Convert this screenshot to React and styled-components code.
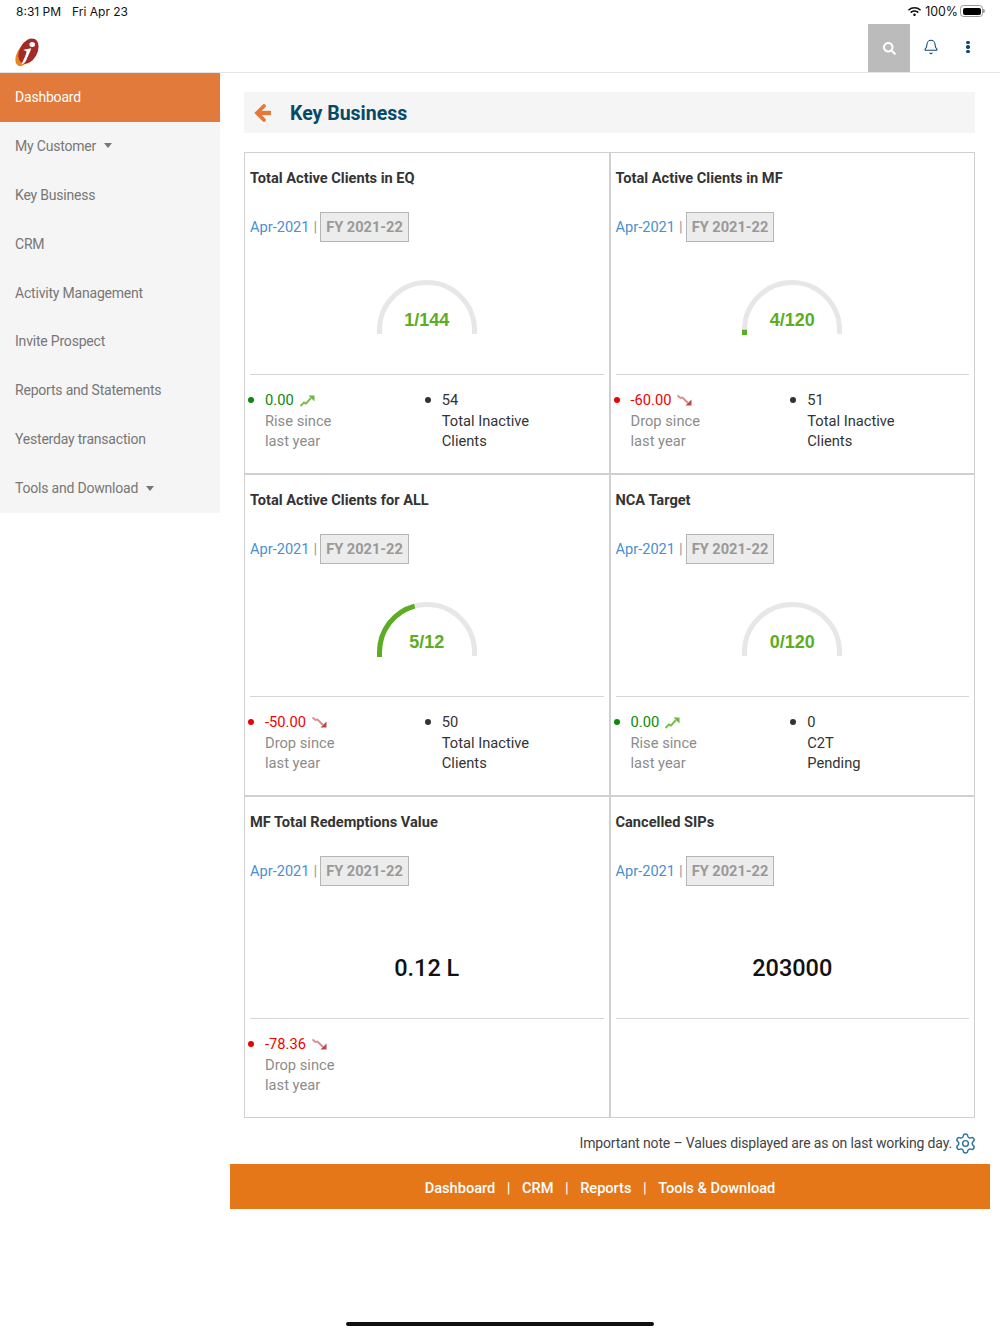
import styled, { createGlobalStyle } from "styled-components";
import { Bell, Settings } from "lucide-react";
import { FaSearch, FaWifi } from "react-icons/fa";

const GlobalStyle = createGlobalStyle`
    html, body {
        margin: 0;
        padding: 0;
        background: #fff;
        font-family: Roboto, "Liberation Sans", sans-serif;
    }
    * {
        box-sizing: border-box;
    }
`;

const Page = styled.div`
    width: 1000px;
    height: 1334px;
    position: relative;
    overflow: hidden;
`;

const StatusBar = styled.div`
    height: 24px;
    padding: 0 15px 2px 16px;
    display: flex;
    justify-content: space-between;
    align-items: center;
    font-family: Inter, "Liberation Sans", sans-serif;
    font-size: 12px;
    color: #111;
`;

const StatusLeft = styled.div`
    display: flex;
    gap: 11px;
`;

const StatusRight = styled.div`
    display: flex;
    align-items: center;
    gap: 4px;
    font-size: 12.4px;
`;

const Battery = styled.div`
    width: 23px;
    height: 12px;
    margin: 0 2px 0 -2px;
    padding: 1.5px;
    border: 1px solid #999;
    border-radius: 3.5px;
    position: relative;
    &::before {
        content: "";
        display: block;
        height: 100%;
        background: #000;
        border-radius: 2px;
    }
    &::after {
        content: "";
        position: absolute;
        right: -3px;
        top: 3px;
        width: 2px;
        height: 4px;
        background: #999;
        border-radius: 0 2px 2px 0;
    }
`;

const Header = styled.header`
    height: 49px;
    display: flex;
    align-items: stretch;
    justify-content: space-between;
    border-bottom: 1px solid #e4e4e4;
`;

const Logo = styled.div`
    padding: 13px 0 0 14px;
`;

const HeaderActions = styled.div`
    display: flex;
    align-items: stretch;
    margin-right: 16px;
`;

const SearchButton = styled.div`
    width: 42px;
    background: #bbbbbb;
    color: #fff;
    display: flex;
    justify-content: center;
    align-items: center;
    font-size: 13px;
`;

const BellButton = styled.div`
    width: 42px;
    color: #0a4a68;
    display: flex;
    justify-content: center;
    align-items: center;
    padding-bottom: 2px;
`;

const DotsButton = styled.div`
    width: 32px;
    padding-bottom: 2px;
    display: flex;
    flex-direction: column;
    justify-content: center;
    align-items: center;
    gap: 1px;
    span {
        width: 3.5px;
        height: 3.5px;
        border-radius: 50%;
        background: #0a4a68;
    }
`;

const Body = styled.div`
    display: flex;
    align-items: flex-start;
`;

const Sidebar = styled.nav`
    width: 220px;
    flex-shrink: 0;
    background: #f5f5f5;
`;

const NavItem = styled.div`
    height: 48.9px;
    padding: 0 0 1px 15px;
    display: flex;
    align-items: center;
    font-size: 14px;
    letter-spacing: -0.2px;
    color: ${({ $active }) => ($active ? "#fff" : "#777")};
    background: ${({ $active }) => ($active ? "#e27a3b" : "transparent")};
`;

const Caret = styled.span`
    margin-left: 8px;
    border-left: 4.5px solid transparent;
    border-right: 4.5px solid transparent;
    border-top: 5px solid #777;
`;

const Main = styled.main`
    flex: 1;
    padding: 19px 10px 0;
`;

const Content = styled.div`
    margin: 0 15px 0 14px;
`;

const TitleBar = styled.div`
    height: 41px;
    padding-left: 10px;
    background: #f5f5f5;
    display: flex;
    align-items: center;
    gap: 18px;
`;

const Title = styled.h1`
    margin: 0;
    padding-top: 1px;
    font-size: 19.5px;
    font-weight: 700;
    color: #064a68;
`;

const CardGrid = styled.div`
    margin-top: 19px;
    display: grid;
    grid-template-columns: 1fr 1fr;
    grid-auto-rows: 322px;
`;

const Card = styled.section`
    border: 1px solid #d0d0d0;
    padding: 0 5px;
`;

const CardTitle = styled.div`
    padding-top: 14px;
    font-size: 14.6px;
    line-height: 22px;
    font-weight: 700;
    color: #333;
`;

const Period = styled.div`
    margin-top: 23px;
    height: 30px;
    display: flex;
    align-items: center;
    gap: 4px;
    font-size: 14.6px;
    color: #4a90d2;
`;

const Pipe = styled.span`
    margin-right: -1px;
    color: #999;
    font-size: 15px;
`;

const PeriodButton = styled.span`
    height: 30px;
    padding: 0 5px;
    display: flex;
    align-items: center;
    background: #ececec;
    border: 1px solid #b5b5b5;
    color: #999;
    font-weight: 700;
`;

const ChartArea = styled.div`
    height: 133px;
    border-bottom: 1px solid #d6d6d6;
    display: flex;
    justify-content: center;
    padding-top: 38px;
`;

const GaugeWrap = styled.div`
    width: 100px;
    height: 55px;
    position: relative;
`;

const GaugeLabel = styled.div`
    position: absolute;
    left: 0;
    right: 0;
    top: 29px;
    text-align: center;
    font-family: "Liberation Sans", Arial, sans-serif;
    font-size: 18px;
    line-height: 22px;
    font-weight: 700;
    color: #5bad23;
`;

const BigValue = styled.div`
    flex: 1;
    padding-top: 26px;
    text-align: center;
    font-size: 23.5px;
    line-height: 36px;
    font-weight: 500;
    color: #111;
`;

const Stats = styled.div`
    padding-top: 15px;
    display: grid;
    grid-template-columns: 1fr 1fr;
    font-size: 14.7px;
    line-height: 20.5px;
`;

const Stat = styled.div`
    position: relative;
    padding-left: 15px;
    color: ${({ $muted }) => ($muted ? "#8c8c8c" : "#333")};
`;

const StatValue = styled.div`
    display: flex;
    align-items: center;
    gap: 6px;
    color: ${({ $color }) => $color};
    &::before {
        content: "";
        position: absolute;
        left: -2px;
        top: 7px;
        width: 6px;
        height: 6px;
        border-radius: 50%;
        background: ${({ $color }) => $color};
    }
`;

const Note = styled.div`
    height: 46px;
    padding-top: 4px;
    display: flex;
    justify-content: flex-end;
    align-items: center;
    gap: 2px;
    font-size: 14px;
    letter-spacing: -0.15px;
    color: #444;
`;

const GearIcon = styled.span`
    display: flex;
    margin-right: -2px;
    color: #2f7396;
`;

const FooterBar = styled.footer`
    height: 45px;
    padding: 2px 20px 0 0;
    background: #e57718;
    color: #fff;
    font-size: 14.6px;
    font-weight: 500;
    display: flex;
    justify-content: center;
    align-items: center;
`;

const FooterSep = styled.span`
    margin: 0 11.5px;
    font-weight: 400;
    font-size: 15px;
`;

const HomeIndicator = styled.div`
    position: absolute;
    left: 346px;
    bottom: 8px;
    width: 308px;
    height: 4px;
    border-radius: 2px;
    background: #111;
`;

const navItems = [
    { label: "Dashboard", active: true },
    { label: "My Customer", caret: true },
    { label: "Key Business" },
    { label: "CRM" },
    { label: "Activity Management" },
    { label: "Invite Prospect" },
    { label: "Reports and Statements" },
    { label: "Yesterday transaction" },
    { label: "Tools and Download", caret: true },
];

const rise = { value: "0.00", line1: "Rise since", up: true };
const drop = (value) => ({ value, line1: "Drop since", up: false });

const cards = [
    {
        title: "Total Active Clients in EQ",
        gauge: "1/144",
        progress: 0,
        trend: rise,
        other: { value: "54", line1: "Total Inactive", line2: "Clients" },
    },
    {
        title: "Total Active Clients in MF",
        gauge: "4/120",
        progress: 0.001,
        trend: drop("-60.00"),
        other: { value: "51", line1: "Total Inactive", line2: "Clients" },
    },
    {
        title: "Total Active Clients for ALL",
        gauge: "5/12",
        progress: 5 / 12,
        trend: drop("-50.00"),
        other: { value: "50", line1: "Total Inactive", line2: "Clients" },
    },
    {
        title: "NCA Target",
        gauge: "0/120",
        progress: 0,
        trend: rise,
        other: { value: "0", line1: "C2T", line2: "Pending" },
    },
    {
        title: "MF Total Redemptions Value",
        big: "0.12 L",
        trend: drop("-78.36"),
    },
    {
        title: "Cancelled SIPs",
        big: "203000",
    },
];

const GAUGE_R = 47.5;

const Gauge = ({ label, progress }) => {
    const angle = Math.PI * progress;
    const endX = 50 - GAUGE_R * Math.cos(angle);
    const endY = 50 - GAUGE_R * Math.sin(angle);
    return (
        <GaugeWrap>
            <svg width="100" height="55" viewBox="0 0 100 55" fill="none">
                <path
                    d={`M2.5 54V50A${GAUGE_R} ${GAUGE_R} 0 0 1 97.5 50V54`}
                    stroke="#e8e6e6"
                    strokeWidth="5"
                />
                {progress > 0 && (
                    <path
                        d={`M2.5 55V50A${GAUGE_R} ${GAUGE_R} 0 0 1 ${endX} ${endY}`}
                        stroke="#5bad23"
                        strokeWidth="5"
                    />
                )}
            </svg>
            <GaugeLabel>{label}</GaugeLabel>
        </GaugeWrap>
    );
};

const TrendIcon = ({ up }) =>
    up ? (
        <svg width="15" height="13" viewBox="0 0 15 13" fill="none">
            <path
                d="M0.5 12L4 8.5L6 9.5L11 4"
                stroke="#7cc04a"
                strokeWidth="2"
            />
            <path d="M8.5 1.5H14.5V7.5Z" fill="#6cb83a" />
        </svg>
    ) : (
        <svg width="15" height="13" viewBox="0 0 15 13" fill="none">
            <path
                d="M0.5 1.5L3.5 4L5.5 3.5L11 9"
                stroke="#d98a8a"
                strokeWidth="1.8"
            />
            <path d="M8.5 11.5H14.5V5.5Z" fill="#b84a4a" />
        </svg>
    );

const BackArrow = () => (
    <svg width="18" height="18" viewBox="0 0 18 18" fill="none">
        <path d="M17 9H4" stroke="#e5793a" strokeWidth="4.4" />
        <path
            d="M10 2L3 9L10 16"
            stroke="#e5793a"
            strokeWidth="3.8"
            strokeLinecap="round"
        />
    </svg>
);

const LogoMark = () => (
    <svg width="28" height="30" viewBox="0 0 30 32">
        <ellipse
            cx="10.5"
            cy="19"
            rx="7.5"
            ry="13"
            transform="rotate(28 10.5 19)"
            fill="#e98420"
        />
        <ellipse
            cx="15.5"
            cy="15"
            rx="9.5"
            ry="14.5"
            transform="rotate(28 15.5 15)"
            fill="#a32a26"
        />
        <ellipse cx="19.5" cy="8" rx="3" ry="2.7" fill="#fff" />
        <path
            d="M10 13.5L18.5 12C17.5 16 14.5 21 13 25C12 27.5 9.5 29 8 29C10.5 24 13 19 13.5 15.5Z"
            fill="#fff"
        />
    </svg>
);

const App = () => (
    <Page>
        <GlobalStyle />
        <StatusBar>
            <StatusLeft>
                <span>8:31 PM</span>
                <span>Fri Apr 23</span>
            </StatusLeft>
            <StatusRight>
                <FaWifi size={13} />
                <span>100%</span>
                <Battery />
            </StatusRight>
        </StatusBar>
        <Header>
            <Logo>
                <LogoMark />
            </Logo>
            <HeaderActions>
                <SearchButton>
                    <FaSearch />
                </SearchButton>
                <BellButton>
                    <Bell size={16} strokeWidth={1.6} />
                </BellButton>
                <DotsButton>
                    <span />
                    <span />
                    <span />
                </DotsButton>
            </HeaderActions>
        </Header>
        <Body>
            <Sidebar>
                {navItems.map((item) => (
                    <NavItem key={item.label} $active={item.active}>
                        {item.label}
                        {item.caret && <Caret />}
                    </NavItem>
                ))}
            </Sidebar>
            <Main>
                <Content>
                    <TitleBar>
                        <BackArrow />
                        <Title>Key Business</Title>
                    </TitleBar>
                    <CardGrid>
                        {cards.map((card) => (
                            <Card key={card.title}>
                                <CardTitle>{card.title}</CardTitle>
                                <Period>
                                    Apr-2021 <Pipe>|</Pipe>
                                    <PeriodButton>FY 2021-22</PeriodButton>
                                </Period>
                                <ChartArea>
                                    {card.big ? (
                                        <BigValue>{card.big}</BigValue>
                                    ) : (
                                        <Gauge
                                            label={card.gauge}
                                            progress={card.progress}
                                        />
                                    )}
                                </ChartArea>
                                <Stats>
                                    {card.trend && (
                                        <Stat $muted>
                                            <StatValue
                                                $color={
                                                    card.trend.up
                                                        ? "#0a8a0a"
                                                        : "#f00000"
                                                }
                                            >
                                                {card.trend.value}
                                                <TrendIcon up={card.trend.up} />
                                            </StatValue>
                                            <div>{card.trend.line1}</div>
                                            <div>last year</div>
                                        </Stat>
                                    )}
                                    {card.other && (
                                        <Stat>
                                            <StatValue $color="#333">
                                                {card.other.value}
                                            </StatValue>
                                            <div>{card.other.line1}</div>
                                            <div>{card.other.line2}</div>
                                        </Stat>
                                    )}
                                </Stats>
                            </Card>
                        ))}
                    </CardGrid>
                    <Note>
                        Important note – Values displayed are as on last working
                        day.
                        <GearIcon>
                            <Settings size={23} strokeWidth={1.5} />
                        </GearIcon>
                    </Note>
                </Content>
                <FooterBar>
                    Dashboard
                    <FooterSep>|</FooterSep>
                    CRM
                    <FooterSep>|</FooterSep>
                    Reports
                    <FooterSep>|</FooterSep>
                    Tools &amp; Download
                </FooterBar>
            </Main>
        </Body>
        <HomeIndicator />
    </Page>
);

export default App;
